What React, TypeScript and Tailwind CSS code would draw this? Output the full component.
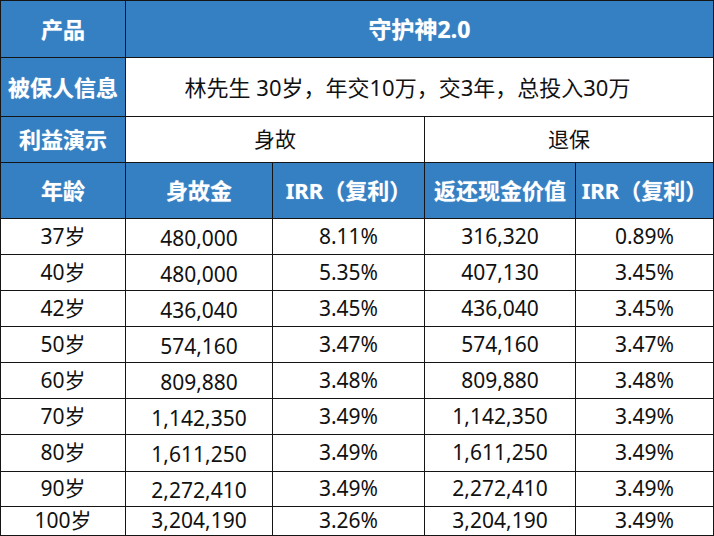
import React from "react";

const rows: [string, string, string, string, string][] = [
  ["37岁", "480,000", "8.11%", "316,320", "0.89%"],
  ["40岁", "480,000", "5.35%", "407,130", "3.45%"],
  ["42岁", "436,040", "3.45%", "436,040", "3.45%"],
  ["50岁", "574,160", "3.47%", "574,160", "3.47%"],
  ["60岁", "809,880", "3.48%", "809,880", "3.48%"],
  ["70岁", "1,142,350", "3.49%", "1,142,350", "3.49%"],
  ["80岁", "1,611,250", "3.49%", "1,611,250", "3.49%"],
  ["90岁", "2,272,410", "3.49%", "2,272,410", "3.49%"],
  ["100岁", "3,204,190", "3.26%", "3,204,190", "3.49%"],
];

const head =
  "flex items-center justify-center bg-[#3580c3] text-white font-bold text-[22px] border-r border-b border-[#151515] [text-shadow:0_0_1px_rgba(255,255,255,0.6)]";
const cell =
  "flex items-center justify-center bg-white text-[#111] text-[21px] border-r border-b border-[#151515]";

export default function App() {
  return (
    <div
      className="w-[714px] h-[536px] overflow-hidden bg-white"
      style={{ fontFamily: '"Noto Sans", "Noto Sans CJK SC", sans-serif' }}
    >
      <div className="grid grid-cols-[125px_147px_152px_151px_138px] grid-rows-[57px_59px_46px_56px_36px_36px_36px_36px_36px_36px_37px_35px_29px] border-l border-t border-[#151515] w-[714px]">
        <div className={head}>产品</div>
        <div className={`${head} col-span-4 text-[23px]`}>守护神2.0</div>

        <div className={head}>被保人信息</div>
        <div className={`${cell} col-span-4 text-[22px] pr-6`}>林先生 30岁，年交10万，交3年，总投入30万</div>

        <div className={head}>利益演示</div>
        <div className={`${cell} col-span-2`}>身故</div>
        <div className={`${cell} col-span-2`}>退保</div>

        <div className={head}>年龄</div>
        <div className={head}>身故金</div>
        <div className={head}>IRR（复利）</div>
        <div className={head}>返还现金价值</div>
        <div className={head}>IRR（复利）</div>

        {rows.map((r, i) => (
          <React.Fragment key={i}>
            <div className={cell}>{r[0]}</div>
            <div className={`${cell} ${i === rows.length - 1 ? "" : "pt-1"}`}>{r[1]}</div>
            <div className={cell}>{r[2]}</div>
            <div className={cell}>{r[3]}</div>
            <div className={cell}>{r[4]}</div>
          </React.Fragment>
        ))}
      </div>
    </div>
  );
}
